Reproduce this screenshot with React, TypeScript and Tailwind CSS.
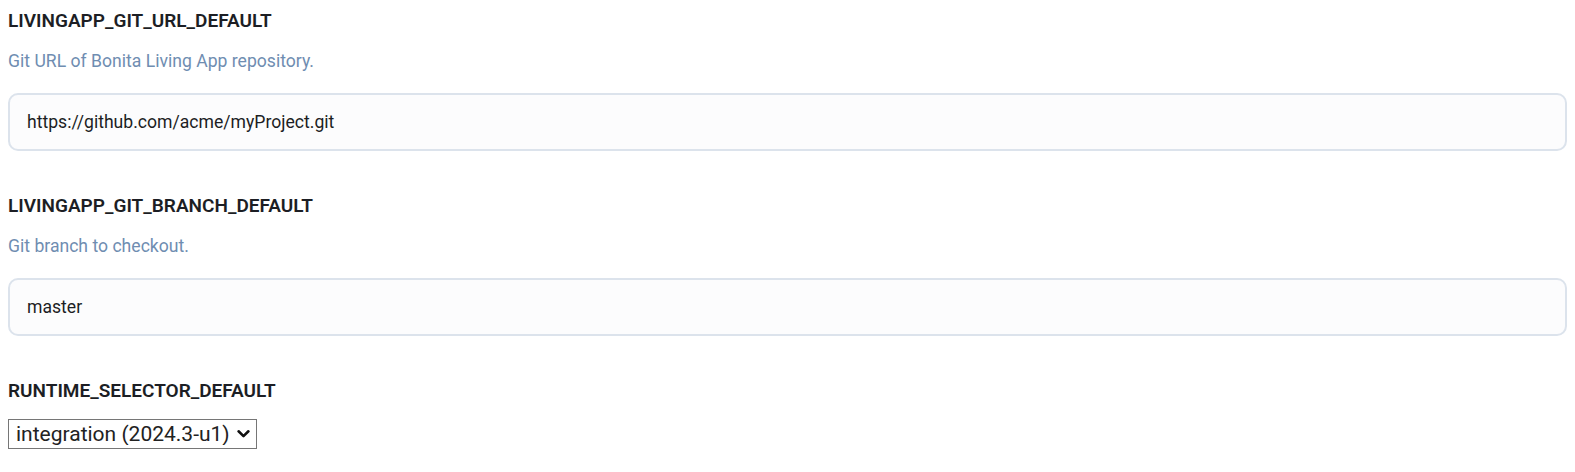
import React from 'react';

interface FieldProps {
  name: string;
  description: string;
  value: string;
}

function TextField({ name, description, value }: FieldProps) {
  return (
    <div className="flex flex-col">
      <label className="text-[19px] leading-[28px] font-semibold text-[#1c1e24]">{name}</label>
      <p className="mt-[13px] text-[17.6px] leading-[26px] text-[#6f8db1]">{description}</p>
      <input
        type="text"
        defaultValue={value}
        className="mt-[19px] h-[58px] w-full rounded-[10px] border-2 border-[#dce3ec] bg-[#fcfcfd] px-[17px] text-[17.6px] text-[#1c1e24] outline-none"
      />
    </div>
  );
}

export default function App() {
  return (
    <div className="min-h-screen bg-white px-2 pt-[7px] font-['Roboto','Liberation_Sans',sans-serif]">
      <div className="flex flex-col gap-[41px]">
        <TextField
          name="LIVINGAPP_GIT_URL_DEFAULT"
          description="Git URL of Bonita Living App repository."
          value="https://github.com/acme/myProject.git"
        />
        <TextField name="LIVINGAPP_GIT_BRANCH_DEFAULT" description="Git branch to checkout." value="master" />
        <div className="flex flex-col items-start">
          <label className="text-[19px] leading-[28px] font-semibold text-[#1c1e24]">RUNTIME_SELECTOR_DEFAULT</label>
          <div className="relative mt-[14px] inline-flex">
            <select
              defaultValue="integration"
              className="h-[30px] appearance-none border border-[#767676] bg-white pl-[7px] pr-[26px] text-[21px] leading-none text-[#222] outline-none"
            >
              <option value="integration">integration (2024.3-u1)</option>
              <option value="latest">latest</option>
            </select>
            <svg
              className="pointer-events-none absolute right-[7px] top-1/2 h-[9px] w-[13px] -translate-y-1/2"
              viewBox="0 0 13 9"
              fill="none"
            >
              <path d="M1.6 1.8 L6.5 6.6 L11.4 1.8" stroke="#111" strokeWidth="2.6" strokeLinecap="round" strokeLinejoin="round" />
            </svg>
          </div>
        </div>
      </div>
    </div>
  );
}
